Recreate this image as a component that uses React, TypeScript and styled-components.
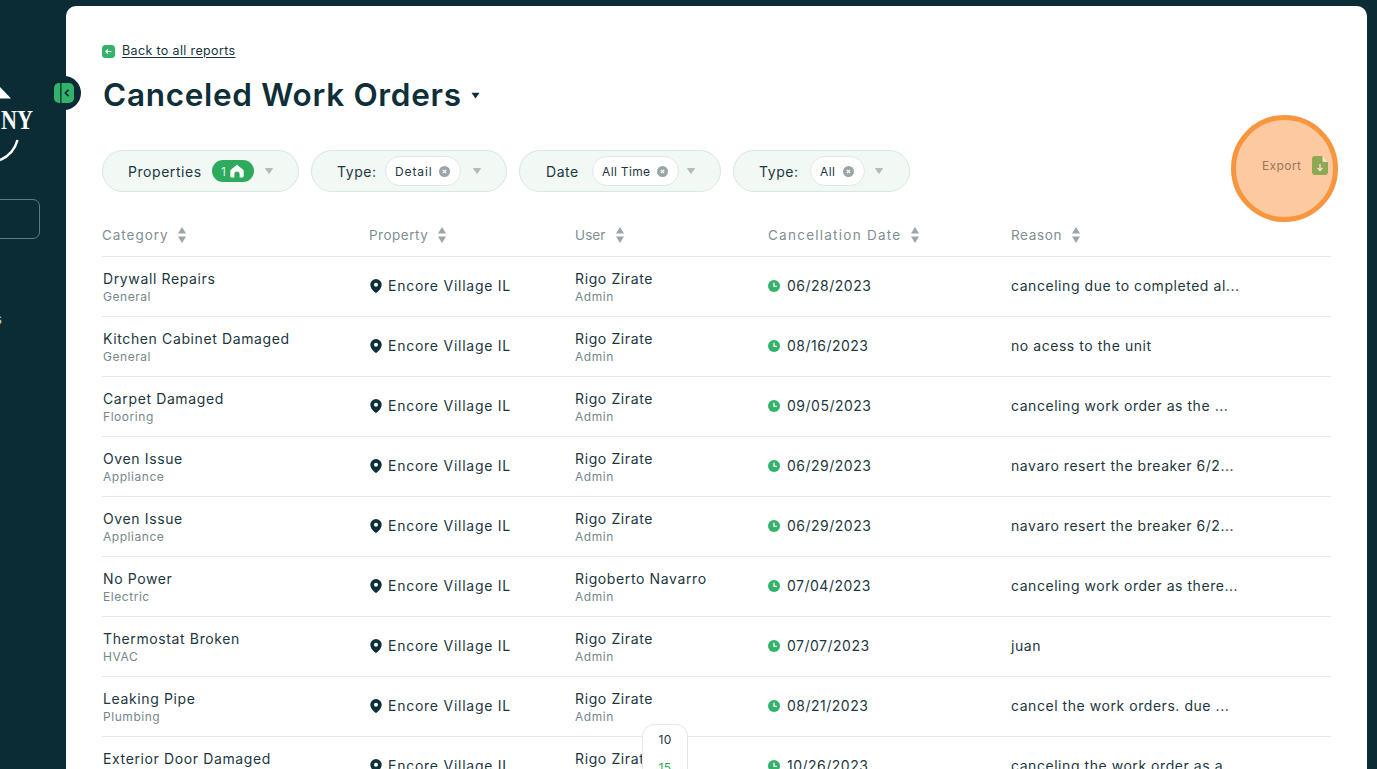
import React from "react";
import styled, { createGlobalStyle } from "styled-components";

const Global = createGlobalStyle`
  html, body { margin: 0; height: 769px; overflow: hidden; background: #0b2c35; }
  body { font-family: Inter, "Liberation Sans", sans-serif; color: #12303a; }
  #root { height: 769px; }
  * { box-sizing: border-box; }
`;

const Shell = styled.div`
  display: flex;
  height: 769px;
  overflow: hidden;
  background: #0b2c35;
  position: relative;
`;
const Sidebar = styled.aside`
  width: 66px;
  flex: none;
  overflow: hidden;
  display: flex;
  flex-direction: column;
  align-items: flex-end;
  padding-top: 85px;
`;
const LogoWrap = styled.div`
  width: 66px;
  height: 82px;
`;
const SearchBox = styled.div`
  width: 100px;
  height: 40px;
  flex: none;
  margin-top: 32px;
  margin-right: 26px;
  border: 1px solid #5f7b80;
  border-radius: 7px;
`;
const NavText = styled.div`
  width: 100%;
  margin-top: 72px;
  color: #c9d4d6;
  font-size: 13px;
  line-height: 16px;
  text-indent: -5px;
`;
const Card = styled.main`
  flex: none;
  width: 1301px;
  margin-top: 6px;
  height: 900px;
  background: #fff;
  border-radius: 10px;
  padding: 36px 36px 0 36px;
`;
const BackRow = styled.div`
  display: flex;
  align-items: center;
  gap: 7px;
  height: 18px;
  font-size: 12.5px;
  letter-spacing: 0.36px;
  color: #17343d;
`;
const BackLink = styled.a`
  text-decoration: underline;
  text-underline-offset: 2px;
  margin-top: -1px;
`;
const TitleRow = styled.div`
  display: flex;
  align-items: center;
  gap: 9px;
  margin-top: 13px;
  height: 44px;
  padding-left: 1px;
`;
const Title = styled.h1`
  margin: 0;
  font-size: 31.5px;
  line-height: 44px;
  font-weight: 600;
  color: #0e2f38;
  letter-spacing: 0.7px;
`;
const Filters = styled.div`
  display: flex;
  gap: 12px;
  margin-top: 33px;
  height: 42px;
`;
const Pill = styled.div<{ $w: number; $pad?: number }>`
  width: ${(p) => p.$w}px;
  height: 42px;
  border-radius: 21px;
  background: #f2f9f5;
  border: 1px solid #d6e9df;
  display: flex;
  align-items: center;
  padding-left: ${(p) => p.$pad ?? 25}px;
  font-size: 14px;
  letter-spacing: 0.55px;
  color: #1d3841;
`;
const PillLabel = styled.span<{ $w: number }>`
  width: ${(p) => p.$w}px;
  flex: none;
`;
const CountChip = styled.span`
  width: 42px;
  height: 22px;
  border-radius: 11px;
  background: #2eaa5d;
  color: #d8f2e1;
  font-size: 12px;
  display: flex;
  align-items: center;
  padding-left: 9px;
  gap: 4px;
  flex: none;
  letter-spacing: 0;
`;
const ValueChip = styled.span<{ $w: number; $ls?: number }>`
  width: ${(p) => p.$w}px;
  height: 30px;
  border-radius: 15px;
  background: #fff;
  border: 1px solid #dfeae4;
  display: flex;
  align-items: center;
  justify-content: space-between;
  padding: 0 10px 0 9px;
  flex: none;
  font-size: 12px;
  letter-spacing: ${(p) => p.$ls ?? 0.35}px;
  color: #1d3841;
`;
const Caret = styled.svg<{ $gap: number }>`
  margin-left: ${(p) => p.$gap}px;
  flex: none;
`;
const Row = styled.div<{ $head?: boolean }>`
  display: grid;
  grid-template-columns: 267px 206px 193px 243px 1fr;
  width: 1229px;
  align-items: center;
  height: ${(p) => (p.$head ? "42px" : "60px")};
  border-bottom: 1px solid #e5e9ea;
`;
const HeadWrap = styled.div`
  margin-top: 23px;
`;
const HeadCell = styled.div<{ $ls: number }>`
  display: flex;
  align-items: center;
  gap: 9px;
  font-size: 13.5px;
  letter-spacing: ${(p) => p.$ls}px;
  color: #7f8f93;
  padding-bottom: 2px;
`;
const CellStack = styled.div<{ $indent?: boolean }>`
  display: flex;
  flex-direction: column;
  padding-top: 1px;
  padding-left: ${(p) => (p.$indent ? 1 : 0)}px;
`;
const Main = styled.span`
  font-size: 14px;
  line-height: 18px;
  letter-spacing: 0.62px;
  color: #1c3740;
`;
const Sub = styled.span`
  font-size: 12px;
  line-height: 16px;
  margin-top: 1px;
  letter-spacing: 0.55px;
  color: #76878b;
`;
const IconCell = styled.div<{ $ls: number; $gap: number }>`
  display: flex;
  align-items: center;
  gap: ${(p) => p.$gap}px;
  padding-bottom: 2px;
  font-size: 14px;
  letter-spacing: ${(p) => p.$ls}px;
  color: #1c3740;
`;
const TextCell = styled.div`
  font-size: 14px;
  letter-spacing: 0.55px;
  padding-bottom: 2px;
  color: #1c3740;
  white-space: nowrap;
`;
const Toggle = styled.div`
  position: absolute;
  left: 47px;
  top: 76px;
  width: 34px;
  height: 34px;
  border-radius: 50%;
  background: #0b2c35;
  display: flex;
  align-items: center;
  padding-left: 7px;
`;
const Highlight = styled.div`
  position: absolute;
  left: 1231px;
  top: 115px;
  width: 107px;
  height: 107px;
  border-radius: 50%;
  border: 5px solid #f89640;
  background: #fdc9a0;
  display: flex;
  align-items: center;
  padding: 0 0 7px 26px;
  gap: 11px;
  font-size: 12px;
  letter-spacing: 0.4px;
  color: #97765a;
`;
const PageSize = styled.div`
  position: absolute;
  left: 642px;
  top: 724px;
  width: 46px;
  height: 70px;
  background: #fff;
  border: 1px solid #e3e7e7;
  border-radius: 12px;
  display: flex;
  flex-direction: column;
  align-items: center;
  padding-top: 7px;
  gap: 12px;
  font-size: 12px;
  line-height: 16px;
  letter-spacing: 0.3px;
  color: #1c3740;
`;
const PageOption = styled.span<{ $active?: boolean }>`
  color: ${(p) => (p.$active ? "#2eaa5d" : "#1c3740")};
`;

const SmallCaret = ({ gap }: { gap: number }) => (
  <Caret $gap={gap} width="10" height="8" viewBox="0 0 10 8"><path d="M1.500 1.500h7L5 6.500z" fill="#b3bebc" stroke="#b3bebc" strokeLinejoin="round" /></Caret>
);
const ClearIcon = () => (
  <svg width="11" height="11" viewBox="0 0 11 11"><circle cx="5.500" cy="5.500" r="5.500" fill="#9aa5a8" /><path d="M3.800 3.800l3.400 3.400M7.200 3.800L3.800 7.200" stroke="#fff" strokeWidth="1.200" /></svg>
);
const HomeIcon = () => (
  <svg width="14" height="14" viewBox="0 0 14 14"><path d="M7 .8L13.200 5.800c.3.3.5.7.5 1.100v5c0 .9-.7 1.600-1.600 1.600H9.600V10a2.600 2.600 0 0 0-5.200 0v3.500H1.900c-.9 0-1.600-.7-1.600-1.600v-5c0-.4.2-.8.5-1.100z" fill="#fff" /></svg>
);
const SortIcon = () => (
  <svg width="10" height="18" viewBox="0 0 10 18"><path d="M5 1L9 7.500H1z" fill="#9aa6a8" /><path d="M5 17L9 10.500H1z" fill="#9aa6a8" /></svg>
);
const PinIcon = () => (
  <svg width="12" height="14" viewBox="0 0 12 14" style={{ marginLeft: 1 }}><path fillRule="evenodd" d="M6 0a5.700 5.700 0 0 1 5.700 5.700c0 3.400-3.600 6.900-5.700 8.300C3.900 12.600.3 9.100.3 5.700A5.700 5.700 0 0 1 6 0zm0 3.700a2 2 0 1 0 0 4 2 2 0 0 0 0-4z" fill="#0e2f38" /></svg>
);
const ClockIcon = () => (
  <svg width="12" height="12" viewBox="0 0 12 12"><circle cx="6" cy="6" r="6" fill="#33b26a" /><path d="M6 2.800V6.300H8.800" stroke="#fff" strokeWidth="1.300" fill="none" /></svg>
);

const rows = [
  ["Drywall Repairs", "General", "Rigo Zirate", "06/28/2023", "canceling due to completed al..."],
  ["Kitchen Cabinet Damaged", "General", "Rigo Zirate", "08/16/2023", "no acess to the unit"],
  ["Carpet Damaged", "Flooring", "Rigo Zirate", "09/05/2023", "canceling work order as the ..."],
  ["Oven Issue", "Appliance", "Rigo Zirate", "06/29/2023", "navaro resert the breaker 6/2..."],
  ["Oven Issue", "Appliance", "Rigo Zirate", "06/29/2023", "navaro resert the breaker 6/2..."],
  ["No Power", "Electric", "Rigoberto Navarro", "07/04/2023", "canceling work order as there..."],
  ["Thermostat Broken", "HVAC", "Rigo Zirate", "07/07/2023", "juan"],
  ["Leaking Pipe", "Plumbing", "Rigo Zirate", "08/21/2023", "cancel the work orders. due ..."],
  ["Exterior Door Damaged", "General", "Rigo Zirate", "10/26/2023", "canceling the work order as a..."],
];
const heads: [string, number][] = [["Category", 0.95], ["Property", 0.5], ["User", 0.1], ["Cancellation Date", 1.25], ["Reason", 0.62]];

export default function App() {
  return (
    <Shell>
      <Global />
      <Sidebar>
        <LogoWrap>
          <svg width="66" height="82" viewBox="0 0 66 82">
            <path d="M0 2L11 13.500H0z" fill="#fff" />
            <path d="M17.500 55A30 30 0 0 1 0 75" stroke="#fff" strokeWidth="2.500" fill="none" />
            <text transform="translate(33 44) scale(.82 1)" textAnchor="end" fill="#fff" fontFamily="'Liberation Serif', serif" fontWeight="700" fontSize="27">NY</text>
          </svg>
        </LogoWrap>
        <SearchBox />
        <NavText>s</NavText>
      </Sidebar>
      <Card>
        <BackRow>
          <svg width="13" height="13" viewBox="0 0 13 13"><rect width="13" height="13" rx="3.500" fill="#33b26a" /><path d="M9.500 6.500H4M6 4.300L3.800 6.500 6 8.700" stroke="#fff" strokeWidth="1.100" fill="none" /></svg>
          <BackLink>Back to all reports</BackLink>
        </BackRow>
        <TitleRow>
          <Title>Canceled Work Orders</Title>
          <svg width="9" height="7" viewBox="0 0 9 7"><path d="M.5.800h8L4.500 6.500z" fill="#0e2f38" /></svg>
        </TitleRow>
        <Filters>
          <Pill $w={197}><PillLabel $w={84}>Properties</PillLabel><CountChip>1<HomeIcon /></CountChip><SmallCaret gap={10} /></Pill>
          <Pill $w={196}><PillLabel $w={48}>Type:</PillLabel><ValueChip $w={76} $ls={0.9}>Detail<ClearIcon /></ValueChip><SmallCaret gap={11} /></Pill>
          <Pill $w={202} $pad={26}><PillLabel $w={46}>Date</PillLabel><ValueChip $w={87}>All Time<ClearIcon /></ValueChip><SmallCaret gap={7} /></Pill>
          <Pill $w={177}><PillLabel $w={51}>Type:</PillLabel><ValueChip $w={55}>All<ClearIcon /></ValueChip><SmallCaret gap={9} /></Pill>
        </Filters>
        <HeadWrap>
          <Row $head>
            {heads.map(([h, ls]) => (
              <HeadCell key={h} $ls={ls}>{h}<SortIcon /></HeadCell>
            ))}
          </Row>
        </HeadWrap>
        {rows.map((r, i) => (
          <Row key={i}>
            <CellStack $indent><Main>{r[0]}</Main><Sub>{r[1]}</Sub></CellStack>
            <IconCell $ls={0.75} $gap={6}><PinIcon />Encore Village IL</IconCell>
            <CellStack><Main>{r[2]}</Main><Sub>Admin</Sub></CellStack>
            <IconCell $ls={0.5} $gap={7}><ClockIcon />{r[3]}</IconCell>
            <TextCell>{r[4]}</TextCell>
          </Row>
        ))}
      </Card>
      <Toggle>
        <svg width="20" height="20" viewBox="0 0 20 20">
          <rect width="20" height="20" rx="5" fill="#33b26a" />
          <rect x="6.200" width="1.300" height="20" fill="#0b2c35" />
          <path d="M14.500 6.800L11.300 10l3.200 3.200" stroke="#0b2c35" strokeWidth="1.700" fill="none" />
        </svg>
      </Toggle>
      <Highlight>
        Export
        <svg width="16" height="19" viewBox="0 0 16 19">
          <path d="M3 0H10L16 6V16a3 3 0 0 1-3 3H3a3 3 0 0 1-3-3V3a3 3 0 0 1 3-3z" fill="#8ea854" />
          <path d="M10.500 0V4.500A1.500 1.500 0 0 0 12 6H16z" fill="#f6e3c8" />
          <path d="M8 8v6.500M5.500 12L8 14.500 10.500 12" stroke="#f6e3c8" strokeWidth="1.300" fill="none" />
        </svg>
      </Highlight>
      <PageSize>
        <PageOption>10</PageOption>
        <PageOption $active>15</PageOption>
      </PageSize>
    </Shell>
  );
}
